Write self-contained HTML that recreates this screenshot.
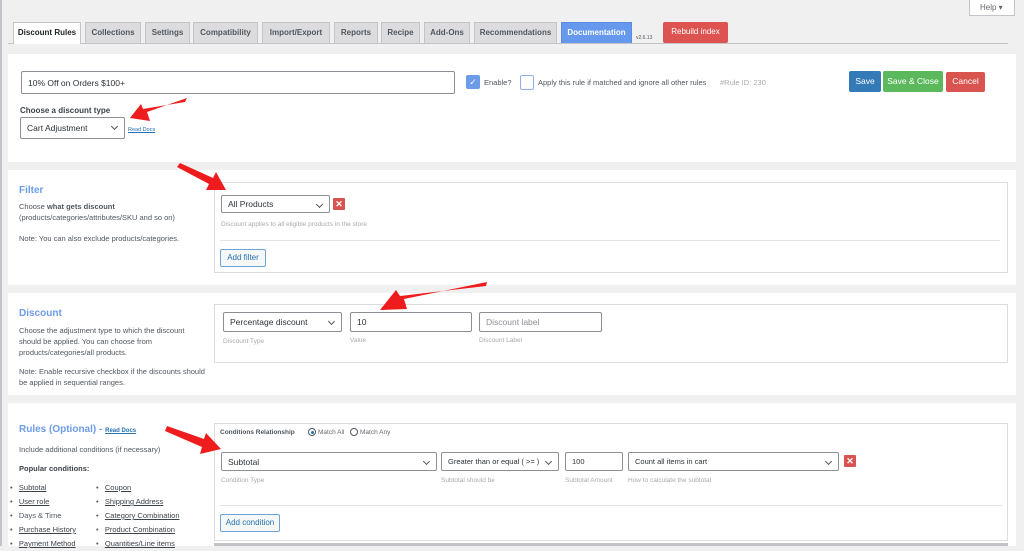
<!DOCTYPE html><html><head><style>
*{box-sizing:border-box;margin:0;padding:0}
body{width:1024px;height:546px;overflow:hidden;background:#f0f0f1;font-family:"Liberation Sans",sans-serif;font-size:8px;color:#3c434a;position:relative}
.a{position:absolute}
.tab{position:absolute;top:22px;height:21px;background:#dcdcde;border:1px solid #c3c4c7;border-bottom:none;font-weight:bold;font-size:8px;color:#50575e;text-align:center;line-height:20px}
.panel{position:absolute;left:8px;width:1008px;background:#fff}
.inp{position:absolute;border:1px solid #8c8f94;border-radius:2px;background:#fff;font-size:8.5px;color:#2c3338;padding-left:6px;line-height:19px;height:21px}
.sel:after{content:"";position:absolute;right:7px;top:6px;width:4px;height:4px;border-right:1.2px solid #50575e;border-bottom:1.2px solid #50575e;transform:rotate(45deg)}
.box{position:absolute;border:1px solid #dcdcde;background:#fff}
.hint{position:absolute;font-size:6.5px;color:#a7aaad}
.h{position:absolute;color:#6c9be8;font-weight:bold;font-size:10px}
.t{position:absolute;font-size:7.5px;color:#50575e;line-height:11px}
.x{position:absolute;width:12px;height:12px;background:#d9534f;border-radius:1px;color:#fff;font-size:9px;font-weight:bold;text-align:center;line-height:12px}
.btn{position:absolute;border:1px solid #6ea3d8;border-radius:2px;background:#f6f7f7;color:#2271b1;font-size:8px;text-align:center;line-height:16px;height:18px}
u{color:#3c434a}
</style></head><body>
<div class="a" style="left:0;top:0;width:2px;height:546px;background:#c3c4c7"></div>
<div class="a" style="left:969px;top:0;width:46px;height:16px;background:#fff;border:1px solid #c3c4c7;border-top:none;font-size:8px;color:#646970;line-height:15px;padding-left:10px">Help ▾</div>
<div class="a" style="left:8px;top:43px;width:1000px;height:1px;background:#c3c4c7"></div>
<div class="tab" style="left:13px;width:68px;background:#fff;color:#1d2327;height:22px">Discount Rules</div>
<div class="tab" style="left:85px;width:56px">Collections</div>
<div class="tab" style="left:145px;width:45px">Settings</div>
<div class="tab" style="left:193px;width:65px">Compatibility</div>
<div class="tab" style="left:262px;width:68px">Import/Export</div>
<div class="tab" style="left:334px;width:44px">Reports</div>
<div class="tab" style="left:381px;width:39px">Recipe</div>
<div class="tab" style="left:424px;width:46px">Add-Ons</div>
<div class="tab" style="left:474px;width:83px">Recommendations</div>
<div class="tab" style="left:561px;width:71px;background:#6699ee;color:#fff;border-color:#5a8be0">Documentation</div>
<div class="a" style="left:636px;top:35px;font-size:5px;color:#50575e;white-space:nowrap">v2.6.13</div>
<div class="a" style="left:663px;top:22px;width:65px;height:21px;background:#dc5350;border-radius:2px;color:#fff;font-size:8px;text-align:center;line-height:20px">Rebuild index</div>

<div class="panel" style="top:54px;height:108px"></div>
<div class="inp" style="left:21px;top:71px;width:434px;height:23px;line-height:22px">10% Off on Orders $100+</div>
<div class="a" style="left:466px;top:75px;width:14px;height:14px;background:#6c9be8;border-radius:2px;color:#fff;font-size:9px;text-align:center;line-height:14px">✓</div>
<div class="t" style="left:484px;top:77px">Enable?</div>
<div class="a" style="left:520px;top:75px;width:14px;height:15px;border:1px solid #8fb1e8;border-radius:2px"></div>
<div class="t" style="left:538px;top:77px">Apply this rule if matched and ignore all other rules</div>
<div class="t" style="left:720px;top:77px;color:#a7aaad">#Rule ID: 230</div>
<div class="a" style="left:849px;top:71px;width:32px;height:21px;background:#337ab7;border-radius:2px;color:#fff;text-align:center;line-height:20px;font-size:8.5px">Save</div>
<div class="a" style="left:883px;top:71px;width:60px;height:21px;background:#5cb85c;border-radius:2px;color:#fff;text-align:center;line-height:20px;font-size:8.5px">Save &amp; Close</div>
<div class="a" style="left:946px;top:72px;width:39px;height:20px;background:#d9534f;border-radius:2px;color:#fff;text-align:center;line-height:19px;font-size:8.5px">Cancel</div>
<div class="a" style="left:20px;top:106px;font-weight:bold;font-size:8px;color:#3c434a">Choose a discount type</div>
<div class="inp sel" style="left:20px;top:117px;width:105px;height:22px;line-height:21px">Cart Adjustment</div>
<div class="a" style="left:128px;top:127px;font-size:5.5px;color:#2271b1;text-decoration:underline">Read Docs</div>

<div class="panel" style="top:170px;height:115px"></div>
<div class="h" style="left:19px;top:185px">Filter</div>
<div class="t" style="left:19px;top:201px">Choose <b>what gets discount</b><br>(products/categories/attributes/SKU and so on)</div>
<div class="t" style="left:19px;top:233px">Note: You can also exclude products/categories.</div>
<div class="box" style="left:214px;top:182px;width:794px;height:91px"></div>
<div class="inp sel" style="left:221px;top:195px;width:109px;height:18px;line-height:17px">All Products</div>
<div class="x" style="left:333px;top:198px">✕</div>
<div class="hint" style="left:221px;top:221px">Discount applies to all eligible products in the store</div>
<div class="a" style="left:220px;top:240px;width:780px;height:1px;background:#e5e5e5"></div>
<div class="btn" style="left:220px;top:249px;width:46px">Add filter</div>

<div class="panel" style="top:293px;height:102px"></div>
<div class="h" style="left:19px;top:308px">Discount</div>
<div class="t" style="left:19px;top:325px">Choose the adjustment type to which the discount<br>should be applied. You can choose from<br>products/categories/all products.</div>
<div class="t" style="left:19px;top:366px">Note: Enable recursive checkbox if the discounts should<br>be applied in sequential ranges.</div>
<div class="box" style="left:214px;top:304px;width:794px;height:59px"></div>
<div class="inp sel" style="left:223px;top:312px;width:119px;height:20px">Percentage discount</div>
<div class="hint" style="left:223px;top:338px">Discount Type</div>
<div class="inp" style="left:350px;top:312px;width:122px;height:20px">10</div>
<div class="hint" style="left:350px;top:337px">Value</div>
<div class="inp" style="left:479px;top:312px;width:123px;height:20px;color:#8c8f94">Discount label</div>
<div class="hint" style="left:479px;top:337px">Discount Label</div>

<div class="panel" style="top:403px;height:143px"></div>
<div class="h" style="left:19px;top:424px">Rules (Optional) - <span style="font-size:6px;color:#2271b1;text-decoration:underline">Read Docs</span></div>
<div class="t" style="left:19px;top:444px">Include additional conditions (if necessary)</div>
<div class="t" style="left:19px;top:463px;font-weight:bold;color:#3c434a">Popular conditions:</div>
<div class="t" style="left:10px;top:481px;line-height:14px">•&nbsp;&nbsp; <u>Subtotal</u><br>•&nbsp;&nbsp; <u>User role</u><br>•&nbsp;&nbsp; Days &amp; Time<br>•&nbsp;&nbsp; <u>Purchase History</u><br>•&nbsp;&nbsp; <u>Payment Method</u></div>
<div class="t" style="left:96px;top:481px;line-height:14px">•&nbsp;&nbsp; <u>Coupon</u><br>•&nbsp;&nbsp; <u>Shipping Address</u><br>•&nbsp;&nbsp; <u>Category Combination</u><br>•&nbsp;&nbsp; <u>Product Combination</u><br>•&nbsp;&nbsp; <u>Quantities/Line items</u></div>
<div class="box" style="left:214px;top:423px;width:794px;height:118px"></div>
<div class="a" style="left:220px;top:429px;font-size:6.5px;font-weight:bold;color:#50575e">Conditions Relationship</div>
<div class="a" style="left:308px;top:428px;width:8px;height:8px;border:1px solid #50575e;border-radius:50%"><div class="a" style="left:1.5px;top:1.5px;width:3px;height:3px;background:#2271b1;border-radius:50%"></div></div>
<div class="a" style="left:318px;top:429px;font-size:6.5px;color:#646970">Match All</div>
<div class="a" style="left:350px;top:428px;width:8px;height:8px;border:1px solid #50575e;border-radius:50%"></div>
<div class="a" style="left:360px;top:429px;font-size:6.5px;color:#646970">Match Any</div>
<div class="inp sel" style="left:221px;top:452px;width:216px;height:19px;line-height:18px">Subtotal</div>
<div class="hint" style="left:221px;top:477px">Condition Type</div>
<div class="inp sel" style="left:441px;top:452px;width:118px;height:19px;line-height:18px;font-size:7.5px">Greater than or equal ( &gt;= )</div>
<div class="hint" style="left:441px;top:477px">Subtotal should be</div>
<div class="inp" style="left:565px;top:452px;width:58px;height:19px;line-height:18px;font-size:7.5px">100</div>
<div class="hint" style="left:565px;top:477px">Subtotal Amount</div>
<div class="inp sel" style="left:628px;top:452px;width:211px;height:19px;line-height:18px;font-size:7.5px">Count all items in cart</div>
<div class="hint" style="left:628px;top:477px">How to calculate the subtotal</div>
<div class="x" style="left:844px;top:455px">✕</div>
<div class="a" style="left:220px;top:505px;width:782px;height:1px;background:#e5e5e5"></div>
<div class="btn" style="left:220px;top:514px;width:60px">Add condition</div>
<div class="a" style="left:214px;top:543px;width:794px;height:3px;background:#c3c4c7"></div>

<svg class="a" style="left:0;top:0" width="1024" height="546">
<g fill="#ee1c1c">
<polygon points="187,98 147,112 150,121 130,118 141,104 143,109 185,102"/>
<polygon points="180,163 213,178 216,172 226,190 206,190 209,184 177,167"/>
<polygon points="487,282 404,299 407,309 380,310 396,290 400,296 486,286"/>
<polygon points="167,426 204,439 206,433 221,449 200,454 202,447 165,431"/>
</g>
</svg>
</body></html>
